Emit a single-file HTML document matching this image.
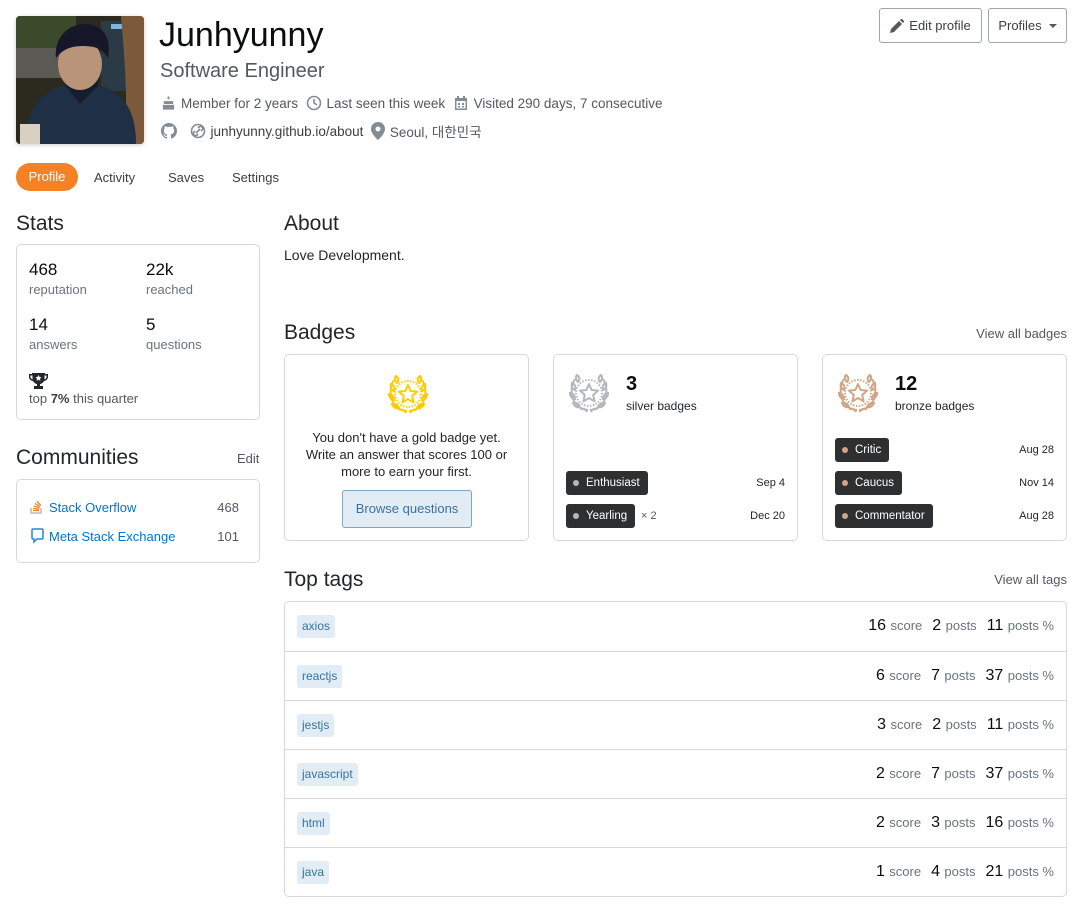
<!DOCTYPE html>
<html><head><meta charset="utf-8"><style>
*{box-sizing:border-box;margin:0;padding:0}
body{width:1087px;height:908px;background:#fff;font-family:"Liberation Sans","Noto Sans CJK KR",sans-serif;color:#232629;position:relative;overflow:hidden}
.a{position:absolute}
.meta{font-size:13.5px;color:#525960;display:flex;align-items:center;white-space:nowrap}
.meta svg{margin-right:5px}
.h2{font-size:21px;color:#232629}
.box{border:1px solid #d6d9dc;border-radius:5px;background:#fff}
.num{font-size:17px;color:#0c0d0e}
.lbl{font-size:13px;color:#6a737c}
.btn{border:1px solid #9fa6ad;border-radius:3px;font-size:13px;color:#3b4045;display:flex;align-items:center;justify-content:center}
.bdg{background:#2d2f31;color:#fff;font-size:11.5px;border-radius:3px;height:24px;display:inline-flex;align-items:center;padding:0 8px 0 7px;position:absolute}
.bdg i{width:6px;height:6px;border-radius:50%;display:inline-block;margin-right:7px}
.dt{position:absolute;right:12px;font-size:11px;color:#232629}
.row{position:absolute;left:0;right:0;height:49px;border-top:1px solid #d6d9dc}
.tag{position:absolute;left:12px;top:13px;background:#e1ecf4;color:#39739d;font-size:12px;border-radius:3px;height:23px;line-height:23px;padding:0 5px}
.st{position:absolute;right:12px;top:15px;font-size:16px;color:#0c0d0e;white-space:nowrap}
.st span{font-size:13px;color:#6a737c;margin-right:10px}
.st span.l{margin-right:0}
</style></head><body>
<svg width="0" height="0" style="position:absolute"><defs>
<g id="lau" fill="none" stroke-width="2">
<circle cx="24" cy="24" r="13" stroke-dasharray="1.5 1.5"/>
<polygon points="24,15 26.6,21 33,21.6 28.2,26 29.6,32.4 24,29 18.4,32.4 19.8,26 15,21.6 21.4,21" stroke-linejoin="round"/>
<path d="M10 10c-4 6-5 16 0 24 4 5 9 7 13 7M38 10c4 6 5 16 0 24-4 5-9 7-13 7"/>
<path d="M12 6c3 2 3 5 1 7-2-2-3-5-1-7zM7 14c3 1 4 4 3 7-3-1-4-4-3-7zM5 24c3 0 5 3 5 6-3 0-5-3-5-6zM8 34c3-1 6 1 7 4-3 1-6-1-7-4zM15 40c3-1 6 0 7 3M36 6c-3 2-3 5-1 7 2-2 3-5 1-7zM41 14c-3 1-4 4-3 7 3-1 4-4 3-7zM43 24c-3 0-5 3-5 6 3 0 5-3 5-6zM40 34c-3-1-6 1-7 4 3 1 6-1 7-4zM33 40c-3-1-6 0-7 3"/>
</g></defs></svg>

<svg class="a" style="left:16px;top:16px;border-radius:4px;box-shadow:0 1px 4px rgba(0,0,0,.2)" width="128" height="128" viewBox="0 0 128 128">
<rect width="128" height="128" fill="#2c2a1e"/>
<rect x="0" y="0" width="60" height="35" fill="#3a4a2a"/>
<rect x="0" y="32" width="55" height="30" fill="#5b5a55"/>
<rect x="85" y="5" width="30" height="70" fill="#2a3b45"/>
<rect x="95" y="8" width="14" height="5" fill="#7fb4e0"/>
<path d="M105 0h23v128h-20c5-40 0-90-3-128z" fill="#7a5a3a"/>
<path d="M10 128c0-30 10-50 35-58h40c25 8 35 28 35 58z" fill="#1f3046"/>
<path d="M50 70l14 18 18-18v-10h-32z" fill="#151e2c"/>
<ellipse cx="64" cy="48" rx="22" ry="26" fill="#b99479"/>
<path d="M40 42c-2-24 16-34 28-34 18 0 28 12 24 34-6-10-14-12-26-12-12 0-20 4-26 12z" fill="#16182a"/>
<rect x="4" y="108" width="20" height="20" fill="#d8d0c0"/>
</svg>

<div class="a" style="left:159px;top:16px;font-size:34px;color:#0c0d0e">Junhyunny</div>
<div class="a" style="left:160px;top:60px;font-size:20px;color:#525960">Software Engineer</div>
<div class="a meta" style="left:161px;top:95px">
<svg width="15" height="16" viewBox="0 0 16 16" fill="#838c95"><path d="M7 1h2v3H7zM3 6h10v3H3zM2 10h12v5H2z"/></svg>Member for 2 years&nbsp;&nbsp;
<svg width="16" height="16" viewBox="0 0 16 16" fill="none" stroke="#838c95" stroke-width="1.6"><circle cx="8" cy="8" r="6.5"/><path d="M8 4v4l3 2"/></svg>Last seen this week&nbsp;&nbsp;
<svg width="16" height="16" viewBox="0 0 16 16" fill="#838c95"><path d="M2 3h12v12H2zM3.5 6v7.5h9V6z"/><rect x="4" y="1" width="2" height="3"/><rect x="10" y="1" width="2" height="3"/><rect x="5" y="8" width="2" height="2"/><rect x="9" y="8" width="2" height="2"/><rect x="5" y="11" width="2" height="1.5"/><rect x="9" y="11" width="2" height="1.5"/></svg>Visited 290 days, 7 consecutive</div>
<div class="a meta" style="left:161px;top:121px">
<svg width="16" height="16" viewBox="0 0 16 16" fill="#838c95"><path d="M8 0C3.6 0 0 3.6 0 8c0 3.5 2.3 6.5 5.5 7.6.4.1.5-.2.5-.4v-1.4c-2.2.5-2.7-1-2.7-1-.4-.9-.9-1.2-.9-1.2-.7-.5.1-.5.1-.5.8.1 1.200.8 1.2.8.7 1.3 1.9.9 2.3.7.1-.5.3-.9.5-1.1-1.8-.2-3.6-.9-3.6-4 0-.9.3-1.6.8-2.1-.1-.2-.4-1 .1-2.1 0 0 .7-.2 2.2.8.6-.2 1.3-.3 2-.3s1.4.1 2 .3c1.5-1 2.2-.8 2.2-.8.4 1.1.2 1.9.1 2.1.5.6.8 1.3.8 2.1 0 3.1-1.9 3.7-3.6 3.9.3.3.5.8.5 1.500v2.2c0 .2.1.5.6.4C13.7 14.5 16 11.5 16 8c0-4.4-3.6-8-8-8z"/></svg>&nbsp;&nbsp;
<svg width="16" height="16" viewBox="0 0 16 16" fill="none" stroke="#838c95" stroke-width="1.6"><circle cx="8" cy="8" r="6.5"/><path d="M6 10l4-4M5 8l-1 1a2 2 0 003 3l1-1M11 8l1-1a2 2 0 00-3-3l-1 1"/></svg><span style="color:#3b4045">junhyunny.github.io/about</span>&nbsp;&nbsp;
<svg width="14" height="18" viewBox="0 0 14 18" fill="#838c95"><path d="M7 0C3 0 0 3 0 7c0 5 7 11 7 11s7-6 7-11c0-4-3-7-7-7zm0 9.5A2.5 2.5 0 117 4.5a2.5 2.5 0 010 5z"/></svg>Seoul, 대한민국</div>

<div class="a btn" style="left:879px;top:8px;width:103px;height:35px"><svg width="14" height="14" viewBox="0 0 14 14" fill="#525960" style="margin-right:5px"><path d="M0 14l1-4 8-8 3 3-8 8zM10 1l1.5-1.5 3 3L13 4z"/></svg>Edit profile</div>
<div class="a btn" style="left:988px;top:8px;width:79px;height:35px">Profiles<span style="margin-left:7px;border:4px solid transparent;border-top:4px solid #525960;margin-top:4px"></span></div>

<div class="a" style="left:16px;top:163px;width:62px;height:28px;background:#f48225;border-radius:14px;color:#fff;font-size:13px;text-align:center;line-height:28px">Profile</div>
<div class="a" style="left:94px;top:170px;font-size:13px;color:#3b4045">Activity</div>
<div class="a" style="left:168px;top:170px;font-size:13px;color:#3b4045">Saves</div>
<div class="a" style="left:232px;top:170px;font-size:13px;color:#3b4045">Settings</div>

<div class="a h2" style="left:16px;top:212px">Stats</div>
<div class="a box" style="left:16px;top:244px;width:244px;height:176px">
<div class="a num" style="left:12px;top:15px">468</div><div class="a lbl" style="left:12px;top:37px">reputation</div>
<div class="a num" style="left:129px;top:15px">22k</div><div class="a lbl" style="left:129px;top:37px">reached</div>
<div class="a num" style="left:12px;top:70px">14</div><div class="a lbl" style="left:12px;top:92px">answers</div>
<div class="a num" style="left:129px;top:70px">5</div><div class="a lbl" style="left:129px;top:92px">questions</div>
<svg class="a" style="left:12px;top:128px" width="19" height="16" viewBox="0 0 19 16" fill="#232629"><path d="M3 0h13v1h3v3c0 2-2 4-4 4-1 2-3 3-4 3v2h3v3H5v-3h3v-2c-1 0-3-1-4-3-2 0-4-2-4-4V1h3zM1.5 2.5V4c0 1 1 2 2 2.5V2.5zM15.5 2.5v4c1-.5 2-1.5 2-2.5V2.5z"/><path d="M9.5 2l1 2 2 .3-1.5 1.4.4 2-1.9-1-1.9 1 .4-2L6.5 4.3l2-.3z" fill="#fff"/></svg>
<div class="a lbl" style="left:12px;top:146px;color:#525960">top <b style="color:#3b4045">7%</b> this quarter</div>
</div>

<div class="a h2" style="left:16px;top:446px">Communities</div>
<div class="a" style="left:237px;top:451px;font-size:13px;color:#525960">Edit</div>
<div class="a box" style="left:16px;top:479px;width:244px;height:84px">
<svg class="a" style="left:13px;top:19px" width="13" height="15" viewBox="0 0 13 15"><path d="M1 9v5h10V9" fill="none" stroke="#bcbbbb" stroke-width="1.5"/><path d="M3 11.5h6M3.2 9.4l6 .8M3.8 7l5.7 1.8M5 4.5l5 3M6.8 2.2l4 4.3" stroke="#f48024" stroke-width="1.3"/></svg>
<div class="a" style="left:32px;top:20px;font-size:13px;color:#0074cc">Stack Overflow</div>
<div class="a" style="right:20px;top:20px;font-size:13px;color:#525960">468</div>
<svg class="a" style="left:14px;top:48px" width="13" height="16" viewBox="0 0 13 16"><path d="M2 1h9a1 1 0 011 1v8a1 1 0 01-1 1H6l-3 3v-3H2a1 1 0 01-1-1V2a1 1 0 011-1z" fill="none" stroke="#1f8bdc" stroke-width="1.5"/></svg>
<div class="a" style="left:32px;top:49px;font-size:13px;color:#0074cc">Meta Stack Exchange</div>
<div class="a" style="right:20px;top:49px;font-size:13px;color:#525960">101</div>
</div>

<div class="a h2" style="left:284px;top:212px">About</div>
<div class="a" style="left:284px;top:247px;font-size:14px;color:#232629">Love Development.</div>

<div class="a h2" style="left:284px;top:321px">Badges</div>
<div class="a" style="right:20px;top:326px;font-size:13px;color:#525960">View all badges</div>

<div class="a box" style="left:284px;top:354px;width:245px;height:187px">
<svg class="a" style="left:99px;top:15px" width="48" height="48" viewBox="0 0 48 48"><use href="#lau" stroke="#ffcc01"/></svg>
<div class="a" style="left:0;right:0;top:74px;text-align:center;font-size:13px;line-height:17px;color:#232629">You don't have a gold badge yet.<br>Write an answer that scores 100 or<br>more to earn your first.</div>
<div class="a" style="left:57px;top:135px;width:130px;height:38px;background:#e1ecf4;border:1px solid #7aa7c7;border-radius:3px;color:#39739d;font-size:13px;text-align:center;line-height:36px">Browse questions</div>
</div>

<div class="a box" style="left:553px;top:354px;width:245px;height:187px">
<svg class="a" style="left:11px;top:14px" width="48" height="48" viewBox="0 0 48 48"><use href="#lau" stroke="#b4b8bc"/></svg>
<div class="a" style="left:72px;top:18px;font-size:20px;font-weight:bold;color:#0c0d0e">3</div>
<div class="a" style="left:72px;top:44px;font-size:12px">silver badges</div>
<div class="bdg" style="left:12px;top:116px"><i style="background:#b4b8bc"></i>Enthusiast</div><div class="dt" style="top:122px">Sep 4</div>
<div class="bdg" style="left:12px;top:149px"><i style="background:#b4b8bc"></i>Yearling</div><span class="a" style="left:87px;top:155px;font-size:11px;color:#525960">× 2</span><div class="dt" style="top:155px">Dec 20</div>
</div>

<div class="a box" style="left:822px;top:354px;width:245px;height:187px">
<svg class="a" style="left:11px;top:14px" width="48" height="48" viewBox="0 0 48 48"><use href="#lau" stroke="#d1a684"/></svg>
<div class="a" style="left:72px;top:18px;font-size:20px;font-weight:bold;color:#0c0d0e">12</div>
<div class="a" style="left:72px;top:44px;font-size:12px">bronze badges</div>
<div class="bdg" style="left:12px;top:83px"><i style="background:#d1a684"></i>Critic</div><div class="dt" style="top:89px">Aug 28</div>
<div class="bdg" style="left:12px;top:116px"><i style="background:#d1a684"></i>Caucus</div><div class="dt" style="top:122px">Nov 14</div>
<div class="bdg" style="left:12px;top:149px"><i style="background:#d1a684"></i>Commentator</div><div class="dt" style="top:155px">Aug 28</div>
</div>

<div class="a h2" style="left:284px;top:568px">Top tags</div>
<div class="a" style="right:20px;top:572px;font-size:13px;color:#525960">View all tags</div>
<div class="a box" style="left:284px;top:601px;width:783px;height:296px;overflow:hidden">
<div class="row" style="top:0;border-top:none"><span class="tag">axios</span><div class="st">16 <span>score</span>2 <span>posts</span>11 <span class="l">posts %</span></div></div>
<div class="row" style="top:49px"><span class="tag">reactjs</span><div class="st">6 <span>score</span>7 <span>posts</span>37 <span class="l">posts %</span></div></div>
<div class="row" style="top:98px"><span class="tag">jestjs</span><div class="st">3 <span>score</span>2 <span>posts</span>11 <span class="l">posts %</span></div></div>
<div class="row" style="top:147px"><span class="tag">javascript</span><div class="st">2 <span>score</span>7 <span>posts</span>37 <span class="l">posts %</span></div></div>
<div class="row" style="top:196px"><span class="tag">html</span><div class="st">2 <span>score</span>3 <span>posts</span>16 <span class="l">posts %</span></div></div>
<div class="row" style="top:245px"><span class="tag">java</span><div class="st">1 <span>score</span>4 <span>posts</span>21 <span class="l">posts %</span></div></div>
</div>
</body></html>
